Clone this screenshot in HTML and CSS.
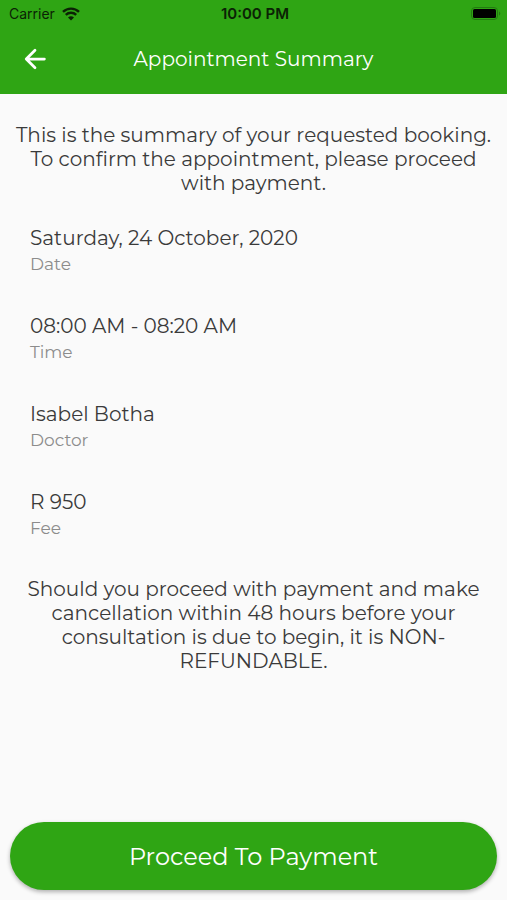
FILE: index.html
```
<!DOCTYPE html>
<html lang="en">
<head>
    <meta charset="utf-8">
    <meta name="viewport" content="width=device-width, initial-scale=1">
    <title>Appointment Summary</title>
    <link rel="stylesheet" href="styles.css">
</head>
<body>
<header class="top">
    <div class="status">
        <div class="carrier">
            <span>Carrier</span>
            <svg class="wifi" viewBox="0 0 18 14" aria-hidden="true">
                <path d="M1 4.9a11.4 11.4 0 0 1 16 0M3.8 7.9a7.4 7.4 0 0 1 10.4 0" fill="none" stroke="#0b2205" stroke-width="2.4"/>
                <path d="M9 13.6L6 10.6a4.3 4.3 0 0 1 6 0z" fill="#0b2205"/>
            </svg>
        </div>
        <time class="clock">10:00 PM</time>
        <svg class="battery" viewBox="0 0 30 14" aria-hidden="true">
            <rect x="0.5" y="0.5" width="26" height="12" rx="3.5" fill="none" stroke="#237c10"/>
            <rect x="2" y="2" width="23" height="9" rx="1.5" fill="#000"/>
            <path d="M28 4.5v4a2.2 2.2 0 0 0 0-4z" fill="#237c10"/>
        </svg>
    </div>
    <div class="bar">
        <button class="back" type="button" aria-label="Back">
            <svg viewBox="0 0 24 24" aria-hidden="true">
                <path d="M19.500 12H5.500M12 5L5 12l7 7" fill="none" stroke="#fff" stroke-width="2.2" stroke-linecap="round" stroke-linejoin="round"/>
            </svg>
        </button>
        <h1>Appointment Summary</h1>
    </div>
</header>
<main>
    <p class="note">This is the summary of your requested booking. To confirm the appointment, please proceed with payment.</p>
    <dl class="details">
        <div class="item"><dt>Date</dt><dd>Saturday, 24 October, 2020</dd></div>
        <div class="item"><dt>Time</dt><dd>08:00 AM - 08:20 AM</dd></div>
        <div class="item"><dt>Doctor</dt><dd>Isabel Botha</dd></div>
        <div class="item"><dt>Fee</dt><dd>R 950</dd></div>
    </dl>
    <p class="note">Should you proceed with payment and make cancellation within 48 hours before your consultation is due to begin, it is NON-REFUNDABLE.</p>
</main>
<footer>
    <button class="pay" type="button">Proceed To Payment</button>
</footer>
</body>
</html>
```
FILE: styles.css
```
*{
    box-sizing: border-box;
    margin: 0;
    padding: 0;
}
body{
    display: flex;
    flex-direction: column;
    min-height: 100vh;
    background: #fafafa;
    color: #3a3a3a;
    font-family: Montserrat, "Open Sans", sans-serif;
}
button{
    border: 0;
    color: #fff;
    font-family: inherit;
    cursor: pointer;
}
/* header */
.top{
    padding-bottom: 4px;
    background: #2fa514;
}
.status{
    display: grid;
    grid-template-columns: 1fr auto 1fr;
    align-items: center;
    height: 28px;
    padding: 0 6px 0 9px;
    color: #0b2205;
    font: 14px/26px Inter, sans-serif;
}
.carrier{
    display: flex;
    align-items: center;
    gap: 7px;
}
.wifi{
    width: 18px;
    height: 14px;
}
.clock{
    font-size: 15px;
    font-weight: 600;
}
.battery{
    justify-self: end;
    width: 30px;
    height: 14px;
}
.bar{
    display: grid;
    grid-template-columns: 54px 1fr 54px;
    align-items: center;
    height: 62px;
    padding: 0 8px;
}
.back{
    height: 54px;
    background: none;
}
.back svg{
    display: block;
    width: 30px;
    height: 30px;
    margin: 0 auto;
}
h1{
    color: #fff;
    font-size: 20px;
    font-weight: 400;
    line-height: 26px;
    text-align: center;
}
/* summary */
main{
    flex: 1;
    padding: 29px 10px;
}
.note{
    font-size: 20px;
    line-height: 24px;
    text-align: center;
}
.details{
    display: flex;
    flex-direction: column;
    gap: 36px;
    padding: 30px 20px 36px;
}
.item{
    display: flex;
    flex-direction: column-reverse;
}
dd{
    font-size: 20px;
    line-height: 26px;
}
dt{
    color: #8c8c8c;
    font-size: 17px;
    line-height: 26px;
}
/* action */
footer{
    padding: 10px;
}
.pay{
    display: block;
    width: 100%;
    height: 68px;
    border-radius: 34px;
    background: #2fa514;
    box-shadow: 0 2px 4px rgba(0,0,0,0.3);
    font-size: 24px;
}
```
